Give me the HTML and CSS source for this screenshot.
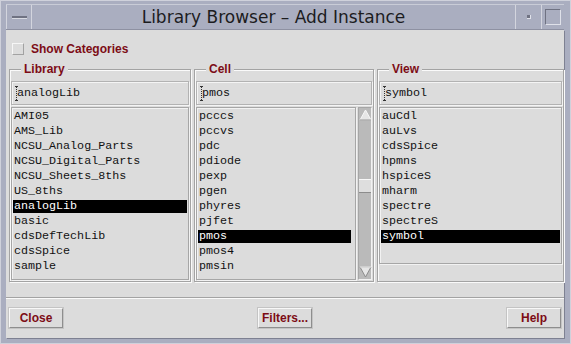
FILE: index.html
```html
<!DOCTYPE html>
<html lang="en">
<head>
  <meta charset="UTF-8">
  <title>Library Browser – Add Instance</title>
  <link rel="stylesheet" href="styles.css">
</head>
<body>
  <div class="window">
    <div class="titlebar">
      <div class="tb-menu"><span class="dash"></span></div>
      <div class="tb-title">Library Browser – Add Instance</div>
      <div class="tb-min"><span class="dot"></span></div>
      <div class="tb-max"><span class="square"></span></div>
    </div>

    <div class="content">
      <label class="option"><span class="checkbox"></span>Show Categories</label>

      <div class="panels">
        <fieldset class="panel">
          <legend>Library</legend>
          <div class="field"><svg class="caret" width="4" height="15" viewBox="0 0 4 15"><path d="M0 0.5h3M0 14.5h3" stroke="#333" stroke-width="1"/><path d="M1.5 1v13" stroke="#333" stroke-width="1" stroke-dasharray="1 1"/></svg>analogLib</div>
          <ul class="list">
            <li>AMI05</li>
            <li>AMS_Lib</li>
            <li>NCSU_Analog_Parts</li>
            <li>NCSU_Digital_Parts</li>
            <li>NCSU_Sheets_8ths</li>
            <li>US_8ths</li>
            <li class="sel">analogLib</li>
            <li>basic</li>
            <li>cdsDefTechLib</li>
            <li>cdsSpice</li>
            <li>sample</li>
          </ul>
        </fieldset>

        <fieldset class="panel">
          <legend>Cell</legend>
          <div class="field"><svg class="caret" width="4" height="15" viewBox="0 0 4 15"><path d="M0 0.5h3M0 14.5h3" stroke="#333" stroke-width="1"/><path d="M1.5 1v13" stroke="#333" stroke-width="1" stroke-dasharray="1 1"/></svg>pmos</div>
          <div class="list-row">
            <ul class="list">
              <li>pcccs</li>
              <li>pccvs</li>
              <li>pdc</li>
              <li>pdiode</li>
              <li>pexp</li>
              <li>pgen</li>
              <li>phyres</li>
              <li>pjfet</li>
              <li class="sel">pmos</li>
              <li>pmos4</li>
              <li>pmsin</li>
            </ul>
            <div class="scrollbar">
              <svg class="arrow" width="13" height="14" viewBox="0 0 13 14"><path d="M6.5 2L12 12H1Z" fill="#e6e6e6" stroke="#f8f8f8" stroke-width="1"/><path d="M12 12H1" stroke="#8c8c8c"/></svg>
              <div class="track"><div class="thumb"></div></div>
              <svg class="arrow" width="13" height="14" viewBox="0 0 13 14"><path d="M6.5 12L12 2H1Z" fill="#e6e6e6" stroke="#8c8c8c" stroke-width="1"/><path d="M1 2H12" stroke="#f8f8f8"/></svg>
            </div>
          </div>
        </fieldset>

        <fieldset class="panel">
          <legend>View</legend>
          <div class="field"><svg class="caret" width="4" height="15" viewBox="0 0 4 15"><path d="M0 0.5h3M0 14.5h3" stroke="#333" stroke-width="1"/><path d="M1.5 1v13" stroke="#333" stroke-width="1" stroke-dasharray="1 1"/></svg>symbol</div>
          <ul class="list list-short">
            <li>auCdl</li>
            <li>auLvs</li>
            <li>cdsSpice</li>
            <li>hpmns</li>
            <li>hspiceS</li>
            <li>mharm</li>
            <li>spectre</li>
            <li>spectreS</li>
            <li class="sel">symbol</li>
          </ul>
        </fieldset>
      </div>

      <div class="separator"></div>

      <div class="buttons">
        <button>Close</button>
        <button>Filters...</button>
        <button>Help</button>
      </div>
    </div>
  </div>
</body>
</html>
```

FILE: styles.css
```css
body {
  margin: 0;
  background: #dcdcdc;
}
.window {
  width: 571px;
  height: 344px;
  box-sizing: border-box;
  background: #aaaec0;
  border: 1px solid #cfd1db;
  padding: 3px 6px 5px 5px;
  display: flex;
  flex-direction: column;
}
.titlebar {
  height: 26px;
  display: flex;
  border-top: 1px solid #c9ccd7;
  border-bottom: 1px solid #8e91a2;
  box-sizing: border-box;
}
.tb-menu {
  width: 24px;
  border-left: 1px solid #d3d5de;
  border-right: 1px solid #d3d5de;
  display: flex;
  align-items: center;
  justify-content: center;
}
.dash {
  width: 15px;
  height: 2px;
  background: #6f7282;
  border-bottom: 1px solid #d8dae2;
}
.tb-title {
  flex: 1;
  text-align: center;
  font-family: "DejaVu Sans", sans-serif;
  font-size: 17px;
  line-height: 24px;
  color: #1c1c1e;
}
.tb-min {
  width: 25px;
  border-left: 1px solid #d3d5de;
  border-right: 1px solid #d3d5de;
  display: flex;
  align-items: center;
  justify-content: center;
}
.dot {
  width: 3px;
  height: 3px;
  background: #6f7282;
  border-right: 1px solid #e0e2ea;
  border-bottom: 1px solid #e0e2ea;
}
.tb-max {
  width: 22px;
  display: flex;
  align-items: center;
  justify-content: center;
}
.square {
  width: 14px;
  height: 14px;
  border: 1px solid #6f7282;
  border-right-color: #dfe1e9;
  border-bottom-color: #dfe1e9;
}
.content {
  flex: 1;
  background: #dcdcdc;
  box-shadow: 1px 1px 0 #7e8192;
  padding: 12px 2px 0 3px;
  font-family: "Liberation Sans", Arial, sans-serif;
}
.option {
  display: flex;
  align-items: center;
  gap: 7px;
  height: 13px;
  margin-left: 3px;
  font-size: 12px;
  font-weight: bold;
  color: #7c0c16;
}
.checkbox {
  width: 10px;
  height: 10px;
  background: #dcdcdc;
  border: 1px solid #f6f6f6;
  border-right-color: #a2a2a2;
  border-bottom-color: #a2a2a2;
}
.panels {
  margin-top: 8px;
  display: grid;
  grid-template-columns: 182px 180px 187px;
  gap: 3px;
}
.panel {
  margin: 0;
  height: 219px;
  box-sizing: border-box;
  border: 1px solid #a3a3a3;
  box-shadow: inset 1px 1px 0 #fafafa, 1px 1px 0 #fafafa;
  padding: 5px 1px 1px 1px;
  min-width: 0;
}
.panel legend {
  margin-left: 10px;
  padding: 0 3px;
  background: #dcdcdc;
  font-size: 12px;
  line-height: 13px;
  font-weight: bold;
  color: #7c0c16;
}
.field {
  height: 24px;
  box-sizing: border-box;
  border: 1px solid #b2b2b2;
  box-shadow: inset 1px 1px 0 #f4f4f4, 1px 1px 0 #f4f4f4;
  display: flex;
  align-items: center;
  padding-left: 3px;
  font-family: "Liberation Mono", "Courier New", monospace;
  font-size: 11.7px;
  color: #111;
}
.caret {
  margin-right: -2px;
}
.list {
  list-style: none;
  margin: 2px 0 0;
  padding: 2px 0 0;
  height: 173px;
  box-sizing: border-box;
  border: 1px solid #a6a6a6;
  box-shadow: inset 1px 1px 0 #f2f2f2, 1px 1px 0 #f2f2f2;
  font-family: "Liberation Mono", "Courier New", monospace;
  font-size: 11.7px;
  color: #111;
  overflow: hidden;
}
.list li {
  height: 13px;
  line-height: 13px;
  margin: 0 1px 2px 1px;
  padding-left: 1px;
  white-space: nowrap;
}
.list li.sel {
  background: #000;
  color: #fff;
}
.list-short {
  height: 157px;
}
.list-row {
  display: flex;
  gap: 2px;
  margin-top: 2px;
}
.list-row .list {
  flex: 1;
  margin-top: 0;
}
.list-row .list li.sel {
  margin-right: 4px;
}
.scrollbar {
  width: 14px;
  height: 173px;
  box-sizing: border-box;
  border: 1px solid #a6a6a6;
  border-right-color: #f2f2f2;
  border-bottom-color: #f2f2f2;
  background: #bababa;
  display: flex;
  flex-direction: column;
}
.arrow {
  display: block;
  flex: none;
}
.track {
  flex: 1;
  position: relative;
}
.thumb {
  position: absolute;
  left: 0;
  right: 0;
  top: 57px;
  height: 12px;
  background: #dedede;
  border-top: 1px solid #f8f8f8;
  border-bottom: 1px solid #8c8c8c;
}
.separator {
  margin: 15px -2px 0 -3px;
  height: 0;
  border-top: 1px solid #a3a3a3;
  border-bottom: 1px solid #fafafa;
}
.buttons {
  display: flex;
  justify-content: space-between;
  margin-top: 9px;
  padding-right: 1px;
}
.buttons button {
  width: 54px;
  height: 20px;
  padding: 0;
  background: #dcdcdc;
  border: 1px solid #f8f8f8;
  border-right-color: #8e8e8e;
  border-bottom-color: #8e8e8e;
  box-shadow: 0 0 0 1px #c4c4c4;
  font-family: "Liberation Sans", Arial, sans-serif;
  font-size: 12px;
  font-weight: bold;
  color: #7c0c16;
}
```
